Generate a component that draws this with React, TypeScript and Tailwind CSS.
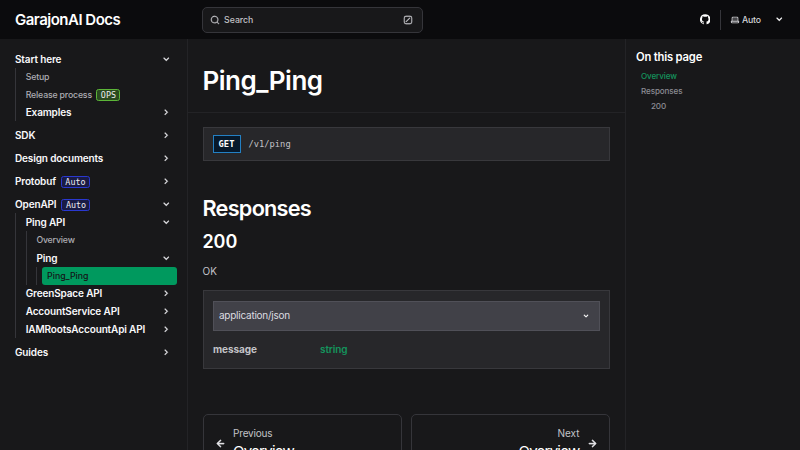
import React from "react";

const icons = {
  right:
    "m14.83 11.29-4.24-4.24a1 1 0 1 0-1.42 1.41L12.71 12l-3.54 3.54a1 1 0 0 0 0 1.41 1 1 0 0 0 .71.29 1 1 0 0 0 .71-.29l4.24-4.24a1.002 1.002 0 0 0 0-1.42Z",
  down: "M17 9.17a1 1 0 0 0-1.41 0L12 12.71 8.46 9.17a1 1 0 1 0-1.41 1.42l4.24 4.24a1.002 1.002 0 0 0 1.42 0L17 10.59a1.002 1.002 0 0 0 0-1.42Z",
  search:
    "M21.71 20.29 18 16.61A9 9 0 1 0 16.61 18l3.68 3.68a.999.999 0 0 0 1.42 0 1 1 0 0 0 0-1.39ZM11 18a7 7 0 1 1 0-14 7 7 0 0 1 0 14Z",
  slash:
    "M17 2H7a5 5 0 0 0-5 5v10a5 5 0 0 0 5 5h10a5 5 0 0 0 5-5V7a5 5 0 0 0-5-5Zm3 15a3 3 0 0 1-3 3H7a3 3 0 0 1-3-3V7a3 3 0 0 1 3-3h10a3 3 0 0 1 3 3v10ZM15.293 6.707a1 1 0 1 1 1.414 1.414l-8.485 8.486a1 1 0 0 1-1.414-1.415l8.485-8.485Z",
  github:
    "M12 .3a12 12 0 0 0-3.8 23.38c.6.12.83-.26.83-.57L9 21.07c-3.34.72-4.04-1.61-4.04-1.61-.55-1.39-1.34-1.76-1.34-1.76-1.08-.74.09-.73.09-.73 1.2.09 1.83 1.24 1.83 1.24 1.08 1.83 2.81 1.3 3.5 1 .1-.78.42-1.31.76-1.61-2.67-.3-5.47-1.33-5.47-5.93 0-1.31.47-2.38 1.24-3.22-.14-.3-.54-1.52.1-3.18 0 0 1-.32 3.3 1.23a11.5 11.5 0 0 1 6 0c2.28-1.55 3.29-1.23 3.29-1.23.64 1.66.24 2.88.12 3.18a4.65 4.65 0 0 1 1.23 3.22c0 4.61-2.8 5.63-5.48 5.92.42.36.81 1.1.81 2.22l-.01 3.29c0 .31.2.69.82.57A12 12 0 0 0 12 .3Z",
  laptop:
    "M21 14h-1V7a3 3 0 0 0-3-3H7a3 3 0 0 0-3 3v7H3a1 1 0 0 0-1 1v2a3 3 0 0 0 3 3h14a3 3 0 0 0 3-3v-2a1 1 0 0 0-1-1ZM6 7a1 1 0 0 1 1-1h10a1 1 0 0 1 1 1v7H6V7Zm14 10a1 1 0 0 1-1 1H5a1 1 0 0 1-1-1v-1h16v1Z",
  left: "M17 11H9.41l3.3-3.29a1.004 1.004 0 1 0-1.42-1.42l-5 5a1 1 0 0 0-.21.33 1 1 0 0 0 0 .76 1 1 0 0 0 .21.33l5 5a1.002 1.002 0 0 0 1.639-.325 1 1 0 0 0-.219-1.095L9.41 13H17a1 1 0 0 0 0-2Z",
};

function Icon({ name, className }: { name: keyof typeof icons; className: string }) {
  return (
    <svg viewBox="0 0 24 24" fill="currentColor" className={`shrink-0 ${className}`} aria-hidden="true">
      {name === "laptop" && <path d="M6 6h12v8H6Z" opacity="0.3" />}
      <path d={icons[name]} stroke="currentColor" strokeWidth={name === "github" || name === "laptop" ? 0 : 0.5} />
    </svg>
  );
}

function Badge({ children, kind }: { children: string; kind: "ops" | "auto" }) {
  return (
    <span
      className={`mt-px flex h-[12px] items-center justify-center rounded-[2.5px] border font-['DejaVu_Sans_Mono',monospace] text-[8.4px] font-normal leading-none tracking-normal text-[#ededf0] ${
        kind === "ops" ? "ml-[4.5px] w-6 border-[#5cb538] bg-[#2b4a20]" : "ml-[5px] w-[29px] border-[#2a38d0] bg-[#191b45]"
      }`}
    >
      {children}
    </span>
  );
}

type Item = { label: string; badge?: "ops" | "auto"; active?: boolean; children?: Item[]; group?: boolean };

const nav: Item[] = [
  {
    label: "Start here",
    group: true,
    children: [{ label: "Setup" }, { label: "Release process", badge: "ops" }, { label: "Examples", group: true }],
  },
  { label: "SDK", group: true },
  { label: "Design documents", group: true },
  { label: "Protobuf", group: true, badge: "auto" },
  {
    label: "OpenAPI",
    group: true,
    badge: "auto",
    children: [
      {
        label: "Ping API",
        group: true,
        children: [{ label: "Overview" }, { label: "Ping", group: true, children: [{ label: "Ping_Ping", active: true }] }],
      },
      { label: "GreenSpace API", group: true },
      { label: "AccountService API", group: true },
      { label: "IAMRootsAccountApi API", group: true },
    ],
  },
  { label: "Guides", group: true },
];

function NavItem({ item }: { item: Item }) {
  if (item.active) {
    return (
      <li className="-ml-[5px] flex h-[17.8px] items-center rounded-[3px] bg-[#00995e] pl-[5px] pt-px text-[8.75px] font-medium text-[#141417]">
        {item.label}
      </li>
    );
  }
  return (
    <li>
      <div
        className={`flex h-[17.8px] items-center pr-[5px] ${
          item.group
            ? "text-[10px] font-semibold tracking-[-0.14px] text-[#f8f8fa]"
            : "pt-px text-[8.75px] font-[450] tracking-[-0.17px] text-[#aeaeb4]"
        }`}
      >
        <span>{item.label}</span>
        {item.badge && <Badge kind={item.badge}>{item.badge === "ops" ? "OPS" : "Auto"}</Badge>}
        {item.group && <Icon name={item.children ? "down" : "right"} className="ml-auto size-[12.5px] text-[#e2e2e6]" />}
      </div>
      {item.children && (
        <ul className="border-l border-[#35353a] pl-[9.7px]">
          {item.children.map((c) => (
            <NavItem key={c.label} item={c} />
          ))}
        </ul>
      )}
    </li>
  );
}

export default function App() {
  return (
    <div className="flex h-[450px] w-[800px] flex-col overflow-hidden bg-[#18181a] font-[Inter,sans-serif] text-[10px] leading-none text-[#c3c3c8]">
      <header className="flex h-[39px] shrink-0 items-center bg-[#0b0b0d] pl-[15px] pr-[15px]">
        <div className="w-[187px] text-[15px] font-semibold tracking-[-0.5px] text-white">GarajonAI Docs</div>
        <div className="flex h-[26px] w-[221px] items-center rounded-[5px] border border-[#35353a] bg-[#18181a] pl-[7px] pr-[9.5px] text-[#c3c3c8]">
          <Icon name="search" className="size-[10px]" />
          <span className="ml-[4px] pt-px text-[8.75px] font-[450]">Search</span>
          <Icon name="slash" className="ml-auto size-[10px]" />
        </div>
        <Icon name="github" className="ml-auto size-[10.5px] text-white" />
        <div className="ml-[10px] h-5 w-px bg-[#35353a]" />
        <div className="ml-[9px] flex w-[55px] items-center text-[8.75px] font-[450] text-[#d4d4d8]">
          <Icon name="laptop" className="size-[10px]" />
          <span className="ml-[2px] pt-px tracking-[-0.2px]">Auto</span>
          <Icon name="down" className="ml-auto size-[12.5px] text-white" />
        </div>
      </header>
      <div className="flex min-h-0 flex-1">
        <nav className="w-[188px] shrink-0 border-r border-[#232326] pl-[15px] pr-[10px] pt-[11px]">
          <ul className="flex flex-col gap-[5.25px]">
            {nav.map((n) => (
              <NavItem key={n.label} item={n} />
            ))}
          </ul>
        </nav>
        <main className="w-[437px] shrink-0">
          <div className="flex h-[74px] items-center border-b border-[#232326] pl-[14.5px] pt-[11px]">
            <h1 className="text-[26px] font-semibold leading-none tracking-[-0.5px] text-white">Ping_Ping</h1>
          </div>
          <div className="pl-[14.5px] pr-[15px] pt-[14px]">
            <div className="flex h-[34px] items-center border border-[#38383c] bg-[#27272a] pl-[9px] font-['DejaVu_Sans_Mono',monospace] text-[8.75px]">
              <span className="flex h-[18px] w-7 items-center justify-center border border-[#2380c4] bg-[#07192b] font-bold text-white">
                GET
              </span>
              <span className="ml-2">/v1/ping</span>
            </div>
            <h2 className="mt-[36px] text-[21.7px] font-semibold leading-[22px] tracking-[-0.75px] text-white">Responses</h2>
            <h3 className="mt-[14px] text-[18px] font-semibold leading-[18px] tracking-[-0.1px] text-white">200</h3>
            <p className="mt-[15px] leading-[10px]">OK</p>
            <section className="mt-[14px] h-[79px] border border-[#38383c] bg-[#27272a] px-[9.5px] pt-[10px]">
              <div className="flex h-[29.5px] items-center border border-[#505058] bg-[#414148] pl-[5px] pr-[8px] text-[#dcdce0]">
                <span className="-mt-px tracking-[-0.25px]">application/json</span>
                <Icon name="down" className="ml-auto size-[10px] text-white" />
              </div>
              <div className="mt-[13px] flex leading-[10px]">
                <span className="w-[107px] font-bold tracking-[-0.05px]">message</span>
                <span className="font-semibold tracking-[-0.1px] text-[#14945d]">string</span>
              </div>
            </section>
            <div className="mt-[45px] grid grid-cols-2 gap-[9.5px]">
              <a className="flex h-[58px] items-center rounded-[5px] border border-[#35353a] pl-[9.5px]">
                <Icon name="left" className="size-[15px] text-[#e2e2e6]" />
                <span className="ml-[5px] flex flex-col pt-[2px]">
                  <span className="leading-[15px] tracking-[-0.18px]">Previous</span>
                  <span className="text-[15px] leading-[21px] tracking-[-0.75px] text-white">Overview</span>
                </span>
              </a>
              <a className="flex h-[58px] items-center justify-end rounded-[5px] border border-[#35353a] pr-[9.5px] text-right">
                <span className="mr-[5px] flex flex-col pt-[2px]">
                  <span className="leading-[15px]">Next</span>
                  <span className="text-[15px] leading-[21px] tracking-[-0.75px] text-white">Overview</span>
                </span>
                <Icon name="left" className="size-[15px] rotate-180 text-[#e2e2e6]" />
              </a>
            </div>
          </div>
        </main>
        <aside className="flex-1 border-l border-[#232326] pl-[10px] pt-[12px]">
          <h2 className="text-[11.25px] font-semibold leading-[12px] tracking-[-0.2px] text-white">On this page</h2>
          <ul className="mt-[6px] pl-[5px] text-[8.1px] font-[450] leading-[15.2px] tracking-[-0.12px] text-[#8c8c94]">
            <li className="text-[#14945d]">Overview</li>
            <li>Responses</li>
            <li className="pl-[10px]">200</li>
          </ul>
        </aside>
      </div>
    </div>
  );
}
